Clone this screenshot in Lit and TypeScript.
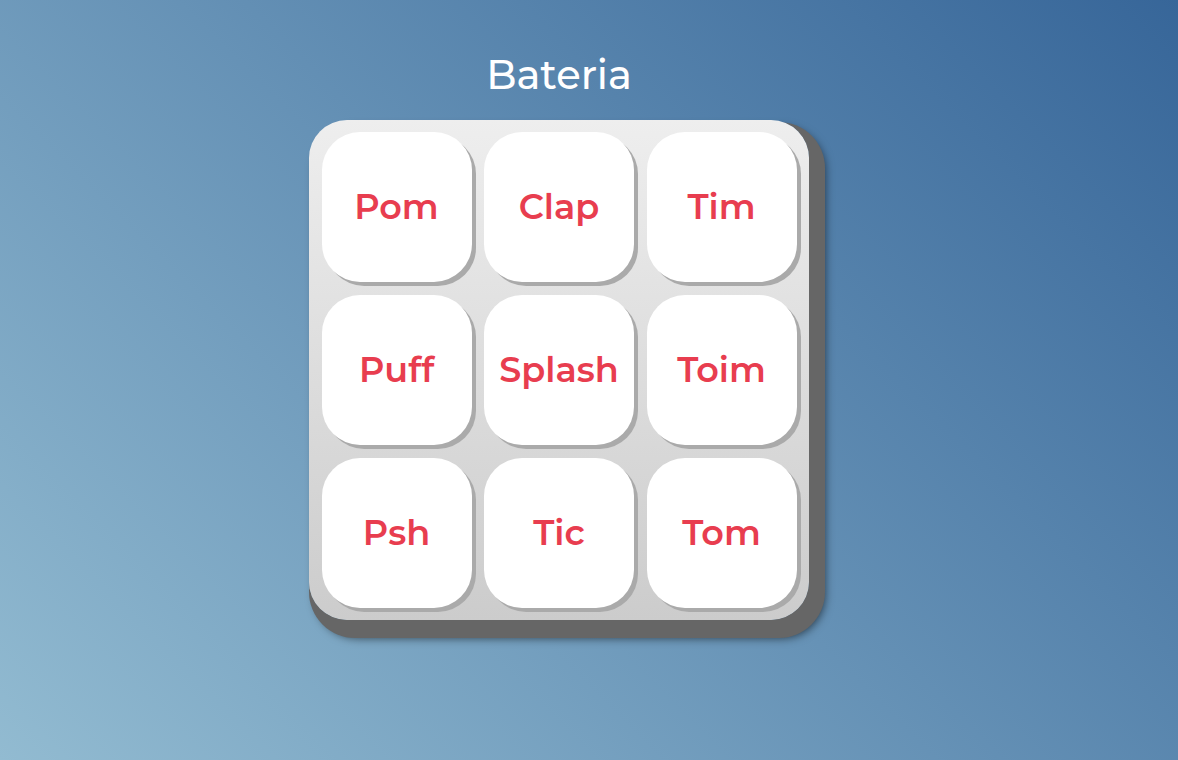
import { LitElement, html, css } from "lit";
import { customElement } from "lit/decorators.js";

const SOUNDS = ["Pom", "Clap", "Tim", "Puff", "Splash", "Toim", "Psh", "Tic", "Tom"];

@customElement("app-root")
export class AppRoot extends LitElement {
  static styles = css`
    :host {
      display: block;
      font-family: Montserrat, "Open Sans", sans-serif;
    }
    .page {
      box-sizing: border-box;
      min-height: 100vh;
      display: flex;
      flex-direction: column;
      align-items: center;
      gap: 20px;
      padding: 50px 60px 50px 0;
      background: linear-gradient(45deg, #92bbd1, #376699);
    }
    .title {
      margin: 0;
      color: #fff;
      font-size: 40px;
      font-weight: 500;
      line-height: 50px;
    }
    .pad {
      box-sizing: border-box;
      width: 100%;
      max-width: 500px;
      display: grid;
      grid-template-columns: repeat(3, 150px);
      grid-auto-rows: 150px;
      justify-content: space-evenly;
      row-gap: 13px;
      padding: 12px 0;
      border-radius: 38px;
      background: linear-gradient(#eee, #ccc);
      box-shadow: 8px 10px 0 8px #666, 11px 13px 10px 5px rgba(0, 0, 0, 0.6);
    }
    .key {
      padding: 0 0 2px;
      border: 0;
      border-radius: 38px;
      background: #fff;
      box-shadow: 4px 4px 0 #aaa;
      color: #e83d4f;
      font-family: inherit;
      font-size: 35px;
      font-weight: 600;
      cursor: pointer;
    }
    .key:active {
      box-shadow: inset 4px 4px 0 #aaa;
    }
  `;

  render() {
    return html`
      <main class="page">
        <h1 class="title">Bateria</h1>
        <section class="pad" aria-label="Bateria">
          ${SOUNDS.map((s) => html`<button class="key" type="button">${s}</button>`)}
        </section>
      </main>
    `;
  }
}
